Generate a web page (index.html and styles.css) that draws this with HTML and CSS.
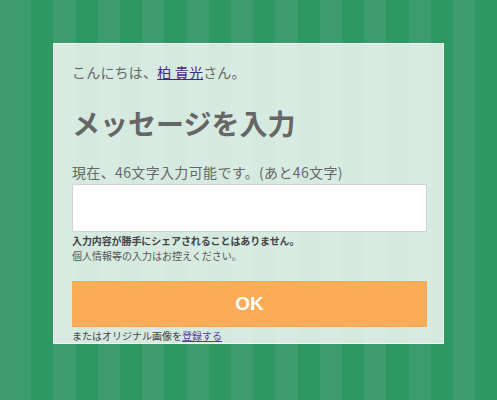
FILE: index.html
```html
<!DOCTYPE html>
<html lang="ja">
  <head>
    <meta charset="UTF-8" />
    <meta name="viewport" content="width=device-width, initial-scale=1.0" />
    <title>メッセージを入力</title>
    <link rel="stylesheet" href="styles.css">
  </head>
  <body>
    <div class="card">
      <p class="greeting">こんにちは、<a href="#">柏 貴光</a>さん。</p>
      <h1 class="title">メッセージを入力</h1>
      <label class="count" for="message">現在、46文字入力可能です。(あと46文字)</label>
      <textarea class="message" id="message"></textarea>
      <p class="note">
        <strong>入力内容が勝手にシェアされることはありません。</strong><br />
        個人情報等の入力はお控えください。
      </p>
      <button class="ok" type="button">OK</button>
      <p class="alt">またはオリジナル画像を<a href="#">登録する</a></p>
    </div>
  </body>
</html>
```

FILE: styles.css
```css
* {
  margin: 0;
  padding: 0;
  box-sizing: border-box;
}
body {
  font-family: "Noto Sans CJK JP", "Liberation Sans", sans-serif;
  color: #666666;
  min-height: 400px;
  background-color: #2f9762;
  background-image: repeating-linear-gradient(
    90deg,
    #3d9c6e 0,
    #3d9c6e 22.2px,
    #2f9762 22.2px,
    #2f9762 44.4px
  );
  background-position: 9px 0;
  overflow: hidden;
}
.card {
  width: 391px;
  height: 301px;
  margin: 43px auto 0;
  padding: 18px 18px 0;
  background: rgba(255, 255, 255, 0.8);
  border: 1px solid rgba(255, 255, 255, 0.55);
  display: flex;
  flex-direction: column;
}
.greeting {
  font-size: 14px;
  line-height: 20px;
  letter-spacing: 0.2px;
}
.greeting a {
  color: #4a2585;
}
.title {
  margin-top: 23px;
  font-size: 28px;
  line-height: 36px;
  font-weight: bold;
  color: #666666;
}
.count {
  margin-top: 21px;
  font-size: 14px;
  line-height: 20px;
  letter-spacing: 0.35px;
}
.message {
  margin-top: 2px;
  width: 355px;
  height: 48px;
  border: 1px solid #cfd4d1;
  background: #ffffff;
  resize: none;
}
.note {
  margin-top: 1px;
  font-size: 10px;
  line-height: 15px;
  color: #555555;
}
.note strong {
  color: #444444;
  letter-spacing: -0.1px;
}
.ok {
  margin-top: 18px;
  width: 355px;
  height: 46px;
  border: none;
  background: #fbac57;
  color: #ffffff;
  font-family: "Liberation Sans", sans-serif;
  font-size: 19px;
  font-weight: bold;
  cursor: pointer;
}
.alt {
  margin-top: 2px;
  font-size: 10px;
  line-height: 14px;
  color: #444444;
}
.alt a {
  color: #5a3a9c;
}
```
